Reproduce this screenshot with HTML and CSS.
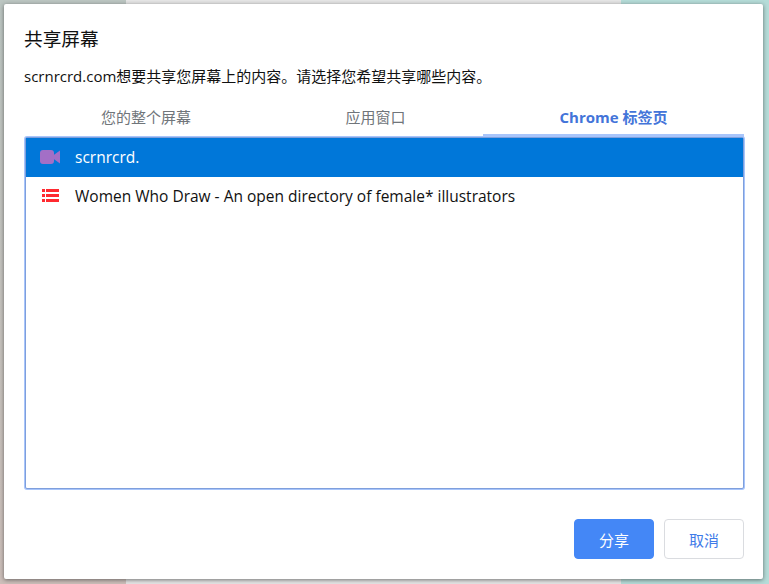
FILE: index.html
```html
<!DOCTYPE html>
<html lang="zh">
<head>
<meta charset="utf-8">
<title>共享屏幕</title>
<link rel="stylesheet" href="styles.css">
</head>
<body>
<div class="backdrop">
  <div class="bg-left"></div>
  <div class="bg-mid"></div>
  <div class="bg-right"></div>
</div>
<main class="dialog">
  <h1 class="title">共享屏幕</h1>
  <p class="desc">scrnrcrd.com想要共享您屏幕上的内容。请选择您希望共享哪些内容。</p>
  <div class="tabs">
    <div class="tab">您的整个屏幕</div>
    <div class="tab">应用窗口</div>
    <div class="tab active">Chrome 标签页</div>
  </div>
  <div class="list">
    <div class="row selected">
      <svg class="icon" width="20" height="20" viewBox="0 0 20 20"><rect x="0" y="3" width="14" height="14" rx="3" fill="#a36fc6"/><path d="M13 8.5 20 3.5v13L13 11.5z" fill="#a36fc6"/></svg>
      <span>scrnrcrd.</span>
    </div>
    <div class="row">
      <svg class="icon" width="20" height="20" viewBox="0 0 20 20"><g fill="#ff2a30"><rect x="2" y="3" width="3" height="3"/><rect x="6" y="3" width="13" height="3"/><rect x="2" y="8" width="3" height="3"/><rect x="6" y="8" width="13" height="3"/><rect x="2" y="13" width="3" height="3"/><rect x="6" y="13" width="13" height="3"/></g></svg>
      <span>Women Who Draw - An open directory of female* illustrators</span>
    </div>
  </div>
  <div class="actions">
    <button class="btn primary">分享</button>
    <button class="btn">取消</button>
  </div>
</main>
</body>
</html>
```
FILE: styles.css
```css
* { box-sizing: border-box; }
html, body { margin: 0; height: 100%; }
body {
  width: 769px;
  height: 584px;
  overflow: hidden;
  position: relative;
  background: #fff;
  font-family: "Open Sans", "Noto Sans CJK SC", sans-serif;
}
.backdrop {
  position: absolute;
  inset: 0;
  display: flex;
}
.bg-left { width: 126px; background: linear-gradient(180deg, #bcc6c2 0%, #c6c4bf 50%, #cdbfba 100%); }
.bg-mid { flex: 1; background: #e6e6e6; }
.bg-right { width: 148px; background: #b5dcd8; }
.dialog {
  position: absolute;
  left: 4px;
  top: 4px;
  width: 759px;
  height: 575px;
  background: #fff;
  border-radius: 2px;
  box-shadow: 0 1px 4px rgba(50, 50, 50, 0.65);
  padding: 24px 19px 0 20px;
  display: flex;
  flex-direction: column;
}
.title {
  margin: 0;
  font-size: 18.7px;
  font-weight: 400;
  line-height: 22px;
  color: #111;
}
.desc {
  margin: 16px 0 0;
  font-size: 15px;
  line-height: 20px;
  color: #111;
}
.tabs {
  display: flex;
  margin-top: 19px;
  height: 32px;
}
.tab {
  width: 244px;
  text-align: center;
  font-size: 15px;
  line-height: 24px;
  color: #70757a;
}
.tab:nth-child(2) { width: 215px; }
.tab.active {
  width: 261px;
  font-weight: 700;
  color: #4374d9;
  border-bottom: 3px solid #a8c5fb;
}
.list {
  height: 352px;
  margin-left: 1px;
  border: 1px solid #7f9fdc;
  border-radius: 2px;
  box-shadow: 0 0 0 1px #a8c5fb;
  background: #fff;
}
.row {
  display: flex;
  align-items: center;
  gap: 15px;
  height: 39px;
  padding: 0 0 1px 14px;
  font-size: 15.5px;
  color: #111;
}
.row.selected {
  background: #0077d9;
  color: #fff;
}
.icon { flex: none; }
.actions {
  display: flex;
  justify-content: flex-end;
  gap: 10px;
  margin-top: 30px;
}
.btn {
  width: 80px;
  height: 40px;
  border: 1px solid #dadce0;
  border-radius: 4px;
  background: #fff;
  color: #3f7be8;
  font-family: inherit;
  font-size: 15px;
  padding: 0;
}
.btn.primary {
  background: #4487f6;
  border-color: #4487f6;
  color: #fff;
}
```
